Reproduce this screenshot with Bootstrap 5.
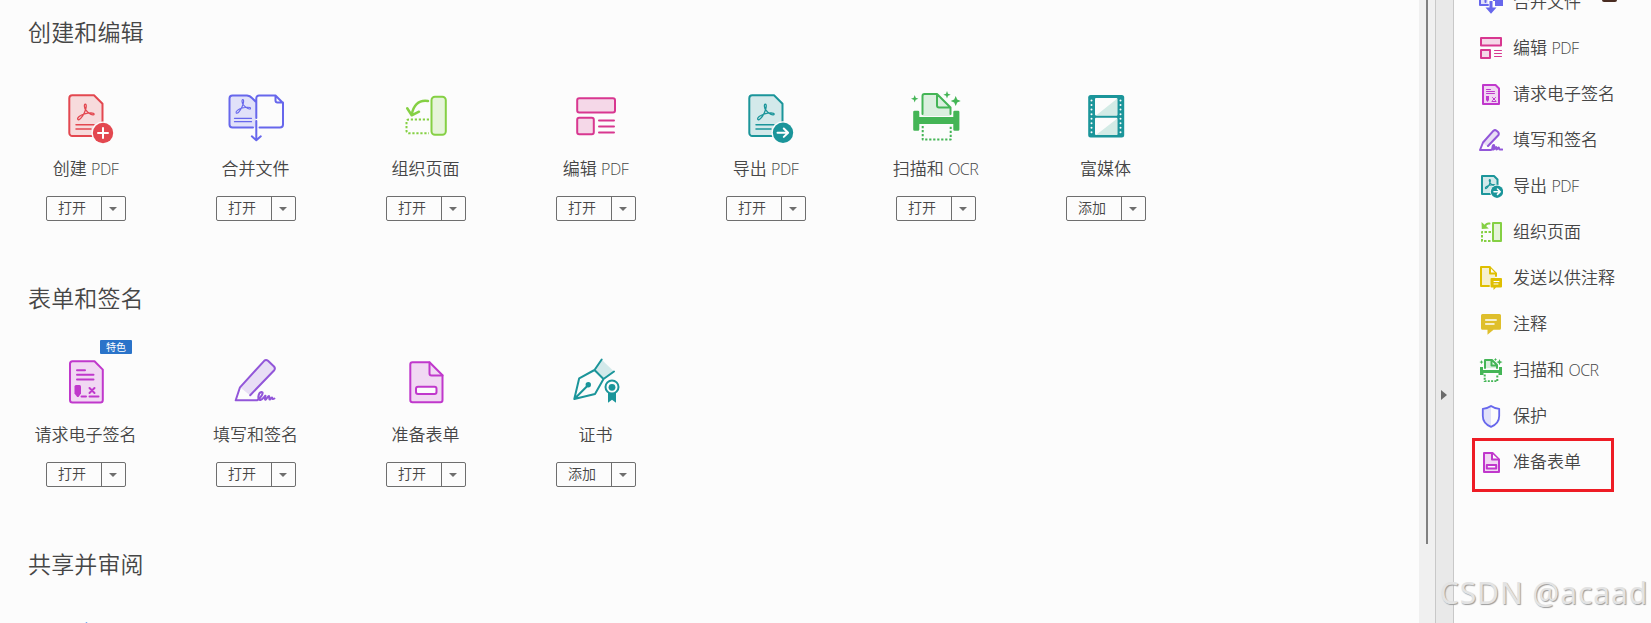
<!DOCTYPE html>
<html lang="zh-CN">
<head>
<meta charset="utf-8">
<title>工具</title>
<link href="https://cdn.jsdelivr.net/npm/bootstrap@5.3.0/dist/css/bootstrap.min.css" rel="stylesheet">
<style>
body{background:#fcfcfc;color:#464646;font-family:"Noto Sans","Noto Sans CJK SC",sans-serif;font-weight:350;height:623px}
svg{fill:none;stroke:currentColor;stroke-width:2;stroke-linecap:round;stroke-linejoin:round;display:block;flex:none}
.solid{fill:currentColor;stroke:none}
.tint{fill:currentColor;fill-opacity:.18}
.paper{fill:#fcfcfc}
.tools-pane{width:1419px;padding-left:1px}
.tool-section{height:266px;flex:none}
.tool-section h2{font-size:23px;font-weight:350;line-height:32px;margin:16px 0 38px 27px;letter-spacing:.15px}
.tool-tile{width:170px;position:relative}
.tool-tile svg{width:60px;height:60px}
.tool-name{font-size:17px;line-height:24px;margin:11px 1px 15px 0;white-space:nowrap}
.tool-name i,.side-item i{font-style:normal;font-family:"Open Sans","Noto Sans",sans-serif;font-size:16px;font-weight:350;letter-spacing:-.5px}
.tool-btn{width:80px;height:25px;border:1px solid #6e6e6e;border-radius:2px;font-size:14px;line-height:22px}
.tool-btn .act{width:55px;border-right:1px solid #6e6e6e;padding-right:4px}
.tool-btn .caret{border:4px solid transparent;border-top:4px solid #6e6e6e;border-bottom:0;margin:1px 0 0 7px}
.feature-tag{position:absolute;left:99px;top:-12px;width:32px;height:14px;background:#2a73c9;color:#fff;font-size:10px;line-height:14px;border-radius:1px;font-weight:400}
.track{width:16px;background:#f0f0f0;padding-left:7px}
.thumb{width:2px;height:544px;background:#808080}
.splitter{width:19px;background:#e9e9e9;border:1px solid #c8c8c8;border-width:0 1px}
.splitter span{border:5.5px solid transparent;border-left:6px solid #6b6b6b;border-right:0;margin-top:390px;margin-left:5px;height:0}
.side-pane{width:197px;position:relative}
.side-list{margin-top:-21px}
.side-item{height:46px;font-size:17px;padding-left:25px;gap:10px;white-space:nowrap;flex:none}
.side-item svg{width:24px;height:24px}
.focus-box{position:absolute;left:18px;top:438px;width:142px;height:54px;border:3px solid #ee1c25}
.pointer-mark{position:absolute;left:148px;top:0;width:15px;height:2px;border-radius:0 0 6px 6px;background:#4a2d22}
.watermark{position:absolute;right:3px;bottom:7px;font:400 30px/46px "Noto Sans",sans-serif;letter-spacing:.9px;color:#e3e3e3;text-shadow:1px 1px 1px #9b9b9b;white-space:nowrap}
.red{color:#e34850}.indigo{color:#6767ec}.lime{color:#85d044}.pink{color:#d83790}.teal{color:#1b959a}.green{color:#44b556}.magenta{color:#c038cc}.violet{color:#9256d9}.gold{color:#dfbf00}.blue{color:#2680eb}
</style>
</head>
<body class="d-flex overflow-hidden">
<svg width="0" height="0" class="position-absolute"><defs>
<path id="acro" d="M21.8 33.4c-1-1.600 2.400-4.200 6.800-5.500 4.200-1.200 10-1.500 9.500.5-.5 1.800-6.100-1.200-8.200-4.200-1.700-2.400-2-5.900-.6-6 1.600 0 1 4.300-.8 8.300-1.900 4.200-5.400 8.600-6.700 6.900z"/>
</defs></svg>
<main class="tools-pane d-flex flex-column overflow-hidden flex-shrink-0">
<section class="tool-section">
<h2>创建和编辑</h2>
<div class="d-flex">
<div class="tool-tile d-flex flex-column align-items-center"><svg class="red" viewBox="0 0 60 60"><path class="tint" d="M16.300 9.300H38l8.500 8.500V50h-30.200a3 3 0 0 1-3-3V12.300a3 3 0 0 1 3-3z"/><use href="#acro" stroke-width="1.300"/><path stroke-width="1.500" d="M20 38.800h18M20 43h15"/><circle class="paper" stroke="none" cx="47" cy="47" r="11.500"/><circle class="solid" cx="47" cy="47" r="10.200"/><path stroke="#fff" d="M47 42v10M42 47h10"/></svg><div class="tool-name">创建 <i>PDF</i></div><div class="tool-btn d-flex text-center"><span class="act">打开</span><span class="caret align-self-center"></span></div></div>
<div class="tool-tile d-flex flex-column align-items-center"><svg class="indigo" viewBox="0 0 60 60"><path class="tint" stroke="none" d="M4 9.500h18l8 7v25H4z"/><path d="M27 41.500H6.500a3 3 0 0 1-3-3V12.500a3 3 0 0 1 3-3H21q3 .2 5 2.500l4 4M33.500 41.500H54a3 3 0 0 0 3-3V17l-7.500-7.500H33a2.700 2.700 0 0 0-2.700 2.700V32M49.500 9.500v5a2 2 0 0 0 2 2H57"/><use href="#acro" stroke-width="1.300" transform="translate(-9 -2.500) scale(.88)"/><path stroke-width="1.300" d="M8.500 32.300h17M8.500 35.700h17"/><path d="M30.300 35v19M25.800 50.300l4.500 4 4.500-4"/></svg><div class="tool-name">合并文件</div><div class="tool-btn d-flex text-center"><span class="act">打开</span><span class="caret align-self-center"></span></div></div>
<div class="tool-tile d-flex flex-column align-items-center"><svg class="lime" viewBox="0 0 60 60"><rect class="tint" x="35.500" y="10.700" width="14.300" height="38" rx="3.500"/><path stroke-linecap="butt" stroke-dasharray="2.200 1.800" d="M33 33.500H13q-2.500 0-2.500 2.500v8.500q0 2.800 2.500 2.800h20"/><path stroke-width="2.500" d="M32 15C22 13.500 17 20 15.700 29M11.200 22.300l4.500 7 7.300-3.600"/></svg><div class="tool-name">组织页面</div><div class="tool-btn d-flex text-center"><span class="act">打开</span><span class="caret align-self-center"></span></div></div>
<div class="tool-tile d-flex flex-column align-items-center"><svg class="pink" viewBox="0 0 60 60"><rect class="tint" x="11.200" y="12.200" width="37.800" height="14.200" rx="2"/><rect class="tint" x="11.200" y="31.700" width="16.600" height="16.600" rx="2"/><path d="M33 34.400h15M33 40.400h15M33 46.400h15"/></svg><div class="tool-name">编辑 <i>PDF</i></div><div class="tool-btn d-flex text-center"><span class="act">打开</span><span class="caret align-self-center"></span></div></div>
<div class="tool-tile d-flex flex-column align-items-center"><svg class="teal" viewBox="0 0 60 60"><path class="tint" d="M16.300 9.300H38l8.500 8.500V50h-30.200a3 3 0 0 1-3-3V12.300a3 3 0 0 1 3-3z"/><use href="#acro" stroke-width="1.300"/><path stroke-width="1.500" d="M20 38.800h18M20 43h15"/><circle class="paper" stroke="none" cx="47" cy="46.700" r="11.500"/><circle class="solid" cx="47" cy="46.700" r="10.200"/><path stroke="#fff" d="M41.500 46.700h10.500M47.800 42.500l4.300 4.200-4.300 4.200"/></svg><div class="tool-name">导出 <i>PDF</i></div><div class="tool-btn d-flex text-center"><span class="act">打开</span><span class="caret align-self-center"></span></div></div>
<div class="tool-tile d-flex flex-column align-items-center"><svg class="green" viewBox="0 0 60 60"><path class="tint" stroke="none" d="M16.500 8H31l13.500 13.500V30h-28z"/><path d="M16.500 28V10a2 2 0 0 1 2-2H31l13.500 13.500V28M31 8v11.500a2 2 0 0 0 2 2h11.500"/><path class="solid" d="M8.500 24.700h3.500q1.300 0 1.300 1.300v5h34v-5q0-1.300 1.300-1.300h3.500q1.300 0 1.300 1.300v17.400q0 1.300-1.300 1.300h-3.500q-1.300 0-1.300-1.300V38h-34v5.400q0 1.300-1.300 1.300H8.500q-1.300 0-1.300-1.300V26q0-1.300 1.300-1.300z"/><path stroke-linecap="butt" stroke-dasharray="2.200 1.800" d="M16.700 40v13.500h28V40"/><path class="solid" d="M8.700 9l1 2.700 2.700 1-2.700 1-1 2.700-1-2.700-2.700-1 2.700-1zM41 5l1 2.700 2.700 1-2.700 1-1 2.700-1-2.700-2.700-1 2.700-1zM49.700 10l1.500 3.500 3.500 1.500-3.500 1.500-1.500 3.500-1.500-3.500-3.500-1.500 3.500-1.500z"/></svg><div class="tool-name">扫描和 <i>OCR</i></div><div class="tool-btn d-flex text-center"><span class="act">打开</span><span class="caret align-self-center"></span></div></div>
<div class="tool-tile d-flex flex-column align-items-center"><svg class="teal" viewBox="0 0 60 60"><rect class="solid" x="12.200" y="9" width="36" height="42.500" rx="2.500"/><rect fill="#fcfcfc" stroke="none" x="19" y="12" width="22.300" height="17.500" rx="1"/><rect fill="#fcfcfc" stroke="none" x="19" y="31.800" width="22.300" height="17.200" rx="1"/><path fill="#d3ebe6" stroke="none" d="M41.300 12.500V29.500H20zM41.300 32.500V49H20z"/><path stroke="#fcfcfc" stroke-dasharray="0 4.550" d="M15.500 14.500V48M44.500 14.500V48"/></svg><div class="tool-name">富媒体</div><div class="tool-btn d-flex text-center"><span class="act">添加</span><span class="caret align-self-center"></span></div></div>
</div>
</section>
<section class="tool-section">
<h2>表单和签名</h2>
<div class="d-flex">
<div class="tool-tile d-flex flex-column align-items-center"><span class="feature-tag text-center">特色</span><svg class="magenta" viewBox="0 0 60 60"><path class="tint" d="M16.500 9.300H38.500l8.300 8.300V48a2.500 2.500 0 0 1-2.500 2.500H16.500A2.500 2.500 0 0 1 14 48V11.800a2.500 2.500 0 0 1 2.500-2.500z"/><path d="M21 18.200h8M21 22.800h16.500M21 27.400h16.500M25.500 44.400H30M33.500 44.400h9M33.500 36l5 5M38.500 36l-5 5"/><path class="solid" d="M18.500 34.500q0-1.500 1.500-1.500h3.500q1.500 0 1.500 1.500v7L22.500 45h-1.300l-2.700-3.500z"/></svg><div class="tool-name">请求电子签名</div><div class="tool-btn d-flex text-center"><span class="act">打开</span><span class="caret align-self-center"></span></div></div>
<div class="tool-tile d-flex flex-column align-items-center"><svg class="violet" viewBox="0 0 60 60"><path class="tint" stroke="none" d="M14 35.300L38 9q2-2 4 0l6.500 6q1.500 2 0 4L24.300 43.500z"/><path d="M24.200 43.200L48 18.500q1.700-2 0-4l-6-5.700q-2-1.700-3.800 0L14 35.300 9.700 48.300H31c4-2.500 7.500-8.500 4.500-8.300-3.500.5-4.500 8.500-1 8 2-.3 4-3.700 5-4.300-.5 2-.8 4.300 0 4 1-.4 2.400-3.700 3.500-3.700.8.600-.2 3.500.8 3.500s1.500-2.500 2.300-2c.5.500 0 2.500 2.300 1"/></svg><div class="tool-name">填写和签名</div><div class="tool-btn d-flex text-center"><span class="act">打开</span><span class="caret align-self-center"></span></div></div>
<div class="tool-tile d-flex flex-column align-items-center"><svg class="magenta" viewBox="0 0 60 60"><path class="tint" d="M16.500 10.300H33.500l13 13V48a2.200 2.200 0 0 1-2.200 2.200H16.500A2.200 2.200 0 0 1 14.300 48V12.500a2.200 2.200 0 0 1 2.200-2.200z"/><path d="M33.500 10.500v11q0 2 2 2h11"/><rect class="paper" x="20" y="34.800" width="20.500" height="7.300" rx="2"/></svg><div class="tool-name">准备表单</div><div class="tool-btn d-flex text-center"><span class="act">打开</span><span class="caret align-self-center"></span></div></div>
<div class="tool-tile d-flex flex-column align-items-center"><svg class="teal" viewBox="0 0 60 60"><path class="tint" stroke="none" d="M36 8l12 11.500-11 7.500-8.500-9z"/><path d="M35.700 7.500L28.500 18l9 9 10.500-7.500M28.500 18L13.200 26.300 8.300 47l20.700-5L37.500 27M8.300 47l14-14"/><circle class="solid" cx="22.300" cy="32.700" r="2.700"/><path class="solid" d="M42 41h8v9.700l-4-3-4 3z"/><circle class="paper" cx="46" cy="35" r="6.500"/><circle class="solid" cx="46" cy="35.300" r="3.400"/></svg><div class="tool-name">证书</div><div class="tool-btn d-flex text-center"><span class="act">添加</span><span class="caret align-self-center"></span></div></div>
</div>
</section>
<section class="tool-section">
<h2>共享并审阅</h2>
<div class="d-flex"><div class="tool-tile d-flex flex-column align-items-center"><svg class="blue" viewBox="0 0 60 60"><path stroke-width="1.500" d="M26 9l4.500-4 4.500 4"/></svg></div></div>
</section>
</main>
<div class="track flex-shrink-0"><div class="thumb"></div></div>
<div class="splitter d-flex flex-shrink-0"><span></span></div>
<aside class="side-pane flex-shrink-0">
<div class="side-list d-flex flex-column">
<div class="side-item d-flex align-items-center"><svg class="indigo" viewBox="0 0 24 24"><path class="tint" d="M9 15H1V3h8M6.500 8v4"/><path class="solid" d="M14 2h10v14h-8V11h-2zM10.500 11h3v6.500h4L12 23.700 6.500 17.500h4z"/></svg>合并文件</div>
<div class="side-item d-flex align-items-center"><svg class="pink" viewBox="0 0 24 24"><rect class="tint" x="2" y="2" width="20" height="7.500"/><rect class="tint" x="2" y="14" width="9" height="8"/><path stroke-width="1" d="M15.500 14.500h7M15.500 17.500h7M15.500 20.500h7"/></svg><span>编辑 <i>PDF</i></span></div>
<div class="side-item d-flex align-items-center"><svg class="magenta" viewBox="0 0 24 24"><path class="tint" d="M4 3h12.500L20 6.500V22H4z"/><path stroke-width="1" d="M7.500 7.500h4M7.500 9.500h8M7.500 11.500h8M13.500 15.500l3 3M16.500 15.500l-3 3M13 19.500h4"/><path class="solid" d="M7 14h3v4l-1.500 2L7 18z"/></svg>请求电子签名</div>
<div class="side-item d-flex align-items-center"><svg class="violet" viewBox="0 0 24 24"><path class="tint" stroke="none" d="M4 15L15 2l5 4L9 19z"/><path d="M9 18L19.500 7q.8-1.500-.5-3l-1.500-1.300q-1.500-1.200-3 0L4 14.500 1 22h11c2-1.500 4-5 2.800-5s-2.300 5-.3 4.500c1.500-.5 2-3 2.600-2.500.4.700-.3 2.500.6 2.500s1.200-2.500 2-2c.5.500 0 2 1 2h2.500"/></svg>填写和签名</div>
<div class="side-item d-flex align-items-center"><svg class="teal" viewBox="0 0 24 24"><path class="tint" d="M3 2h12l3.500 3.500V20H3z"/><use href="#acro" stroke-width="2" transform="translate(-6.200 -5) scale(.58)"/><circle class="paper" stroke="none" cx="18" cy="17.700" r="7"/><circle class="solid" cx="18" cy="17.700" r="6.200"/><path stroke="#fff" stroke-width="1.600" d="M15 17.700h6M18.500 15l2.700 2.700-2.700 2.700"/></svg><span>导出 <i>PDF</i></span></div>
<div class="side-item d-flex align-items-center"><svg class="lime" viewBox="0 0 24 24"><rect class="tint" x="14" y="3" width="8" height="18"/><path stroke-linecap="butt" stroke-dasharray="2.500 1.500" d="M12 12H3v9h9"/><path d="M10.500 3.500Q7.500 3 6 6"/><path class="solid" d="M2.500 2l.3 7 7-.5z"/></svg>组织页面</div>
<div class="side-item d-flex align-items-center"><svg class="gold" viewBox="0 0 24 24"><path class="tint" d="M10 20H2V1h8.500L17 7.500V10"/><path class="paper" d="M11 1.500V7.500h5.500"/><path class="solid" d="M12.500 12H22q1 0 1 1v7.500q0 1-1 1h-5l-2.500 2.500v-2.500h-2q-1 0-1-1V13q0-1 1-1z"/><path stroke="#fff" stroke-width="1" d="M15 15.500h5M15 18h4"/></svg>发送以供注释</div>
<div class="side-item d-flex align-items-center"><svg class="gold" viewBox="0 0 24 24"><path fill="#dfbf2c" stroke="none" d="M3.500 2h17Q22 2 22 3.500v12.700q0 1.500-1.500 1.500h-6l-6 5v-5h-5q-1.500 0-1.500-1.500V3.500Q2 2 3.500 2z"/><path stroke="#fff" stroke-width="1.500" d="M6.700 8h10.500M6.700 12H15"/></svg>注释</div>
<div class="side-item d-flex align-items-center"><svg class="green" viewBox="0 0 24 24"><path class="tint" d="M6 10V2h7l5 5v3M12.500 2v5.500H18"/><path class="solid" d="M1 9h3v3h16V9h3v8h-3.500v-2h-15v2H1zM2.500 2l.6 1.500 1.500.6-1.500.6-.6 1.500-.6-1.500L.4 4.100l1.500-.6zM16.500 0l.6 1 .9.500-.9.500-.6 1-.6-1-.9-.5.900-.5zM20.500 1l.9 2.200 2.200.9-2.200.9-.9 2.200-.9-2.200-2.200-.9 2.200-.9z"/><path stroke-linecap="butt" stroke-dasharray="2 1.300" d="M5.700 16.500v6.800h12.600v-6.800"/></svg><span>扫描和 <i>OCR</i></span></div>
<div class="side-item d-flex align-items-center"><svg class="indigo" viewBox="0 0 24 24"><path class="tint" stroke="none" d="M12 2L4 5v7q0 8 8 10.500z"/><path stroke-width="1.800" d="M12 2q3.500 2.500 8.200 2.800V12q0 7.500-8.200 10.800Q3.800 19.500 3.800 12V4.800Q8.500 4.500 12 2z"/></svg>保护</div>
<div class="side-item d-flex align-items-center"><svg class="magenta" viewBox="0 0 24 24"><path class="tint" d="M5 3h8.500L20 9.500V22H5z"/><path class="paper" d="M13 3.500v6h6.500"/><rect class="paper" x="7.800" y="15" width="9.400" height="3.500"/></svg>准备表单</div>
</div>
<div class="pointer-mark"></div>
<div class="focus-box"></div>
<div class="watermark">CSDN @acaad</div>
</aside>
<script src="https://cdn.jsdelivr.net/npm/bootstrap@5.3.0/dist/js/bootstrap.bundle.min.js"></script>
</body>
</html>
